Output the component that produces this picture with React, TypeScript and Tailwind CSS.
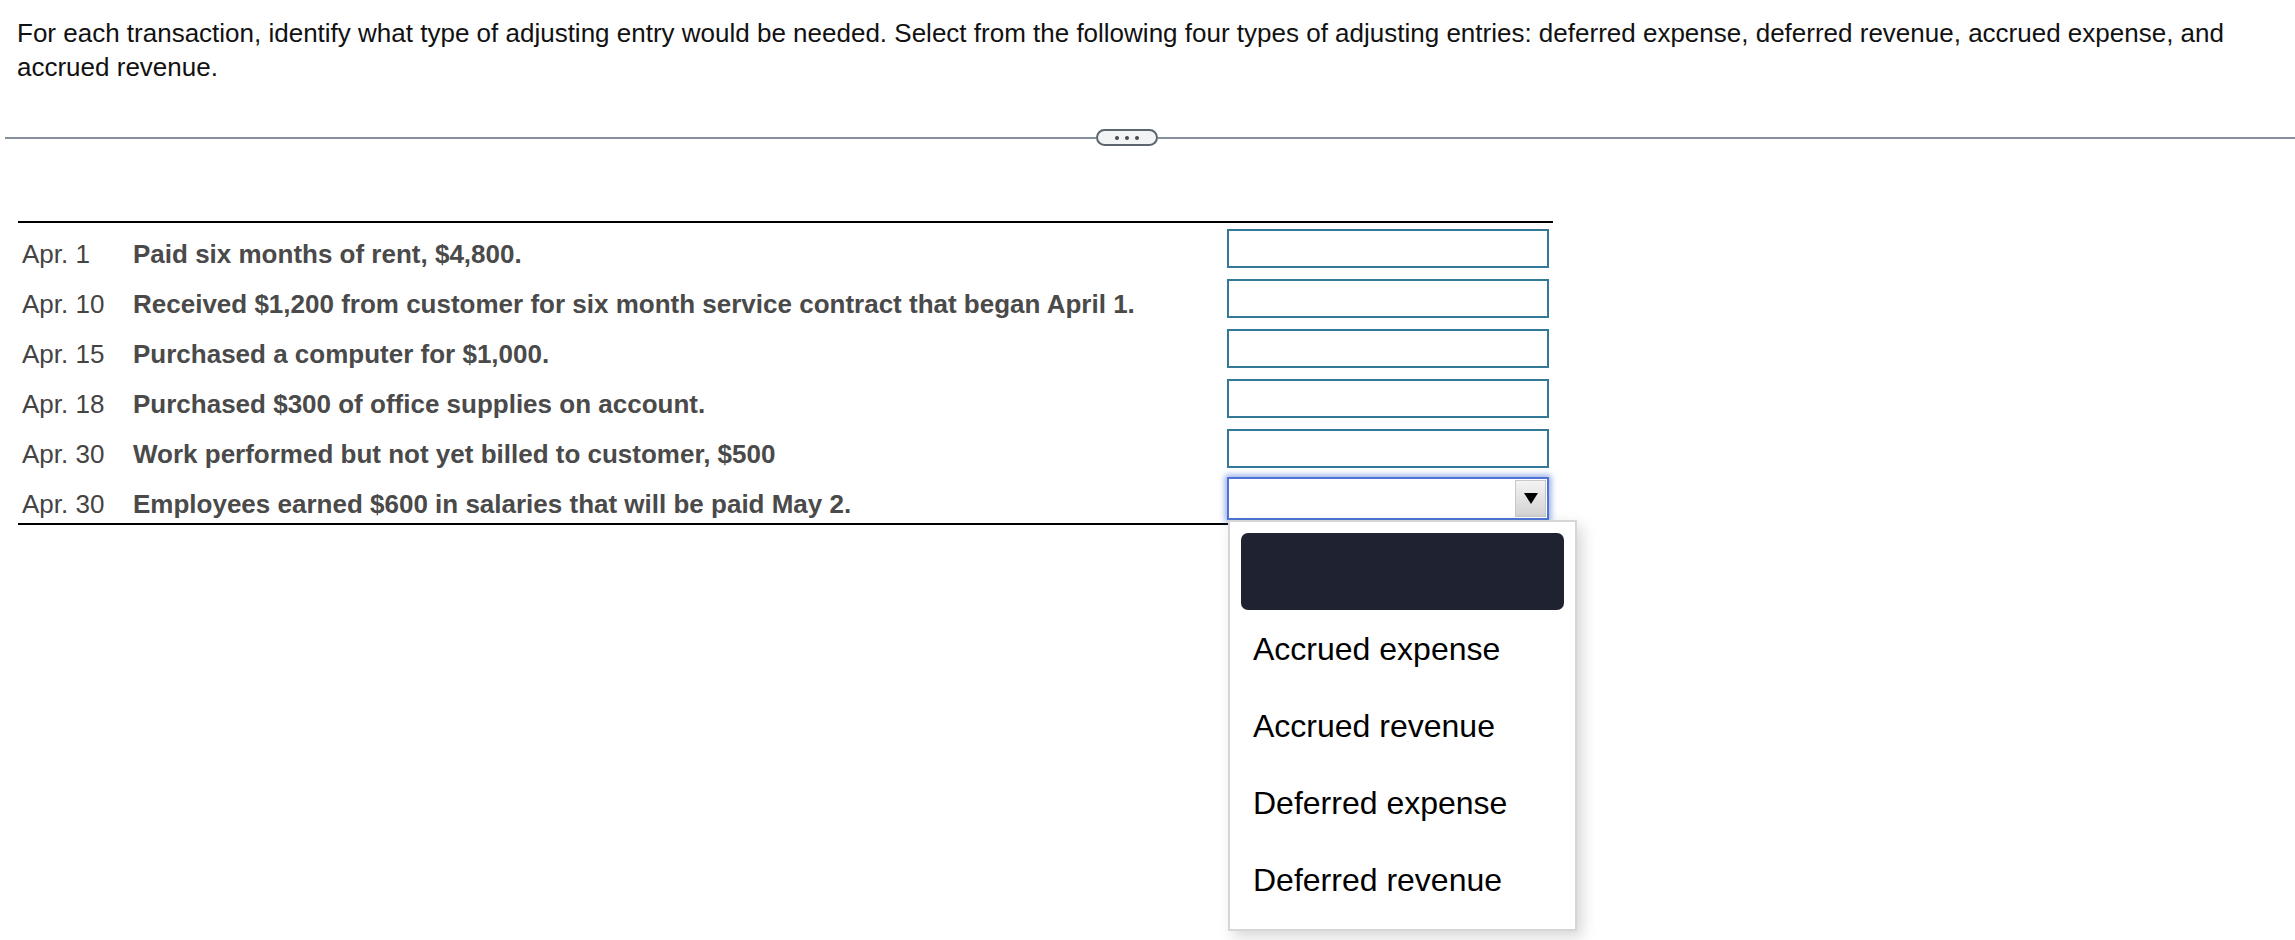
import React from 'react';

type Row = { date: string; text: string };

const rows: Row[] = [
  { date: 'Apr. 1', text: 'Paid six months of rent, $4,800.' },
  { date: 'Apr. 10', text: 'Received $1,200 from customer for six month service contract that began April 1.' },
  { date: 'Apr. 15', text: 'Purchased a computer for $1,000.' },
  { date: 'Apr. 18', text: 'Purchased $300 of office supplies on account.' },
  { date: 'Apr. 30', text: 'Work performed but not yet billed to customer, $500' },
  { date: 'Apr. 30', text: 'Employees earned $600 in salaries that will be paid May 2.' },
];

const options = ['Accrued expense', 'Accrued revenue', 'Deferred expense', 'Deferred revenue'];

// open select in the last row, list shown under it
function OpenSelect() {
  return (
    <div className="relative mt-[4px] w-[322px] h-[43px]">
      <div className="flex h-full w-full border-2 border-[#4d74d6] bg-white p-[1px] shadow-[0_0_6px_2px_rgba(77,116,214,0.6)]">
        <div className="flex-1" />
        <div className="flex w-[31px] items-center justify-center border border-[#c8c8c8] bg-gradient-to-b from-[#f4f4f4] to-[#d2d2d2]">
          <svg width="14" height="11" viewBox="0 0 14 11">
            <polygon points="0,0 14,0 7,11" fill="#000" />
          </svg>
        </div>
      </div>
      <div className="absolute left-[1px] top-[43px] z-10 w-[349px] border-2 border-[#d6d6d6] bg-white py-[11px] shadow-[5px_6px_14px_rgba(0,0,0,0.16)]">
        <div className="mx-[11px] h-[77px] rounded-[7px] bg-[#1f2230]" />
        {options.map((o) => (
          <div key={o} className="flex h-[77px] items-center px-[23px] text-[32px] text-black">
            {o}
          </div>
        ))}
      </div>
    </div>
  );
}

export default function App() {
  return (
    <div className="min-h-[940px] bg-white font-['Liberation_Sans',Arial,sans-serif]">
      <div className="pl-[17px] pr-[40px] pt-[16px] text-[26px] leading-[34px] text-[#111]">
        For each transaction, identify what type of adjusting entry would be needed. Select from the following four types of adjusting entries: deferred expense, deferred revenue, accrued expense, and accrued revenue.
      </div>

      <div className="mt-[45px] ml-[5px] flex h-[17px] items-center">
        <div className="h-[2px] w-[1091px] bg-[#868f9c]" />
        <div className="flex h-[17px] w-[62px] items-center justify-center gap-[6px] rounded-full border-2 border-[#5c6470] bg-[#f2f3f5]">
          <span className="h-[4px] w-[4px] rounded-full bg-[#444b55]" />
          <span className="h-[4px] w-[4px] rounded-full bg-[#444b55]" />
          <span className="h-[4px] w-[4px] rounded-full bg-[#444b55]" />
        </div>
        <div className="h-[2px] flex-1 bg-[#868f9c]" />
      </div>

      <div className="mt-[75px] ml-[18px] w-[1535px] border-t-2 border-b-2 border-black">
        {rows.map((r, i) => (
          <div key={i} className="flex h-[50px]">
            <div className="w-[115px] pl-[4px] pt-[16px] text-[26px] leading-[30px] text-[#444]">{r.date}</div>
            <div className="flex-1 pt-[16px] text-[26px] font-bold leading-[30px] text-[#4a4a4a]">{r.text}</div>
            <div className="mr-[4px]">
              {i === rows.length - 1 ? (
                <OpenSelect />
              ) : (
                <div className="mt-[6px] h-[39px] w-[322px] border-2 border-[#337a98] bg-white" />
              )}
            </div>
          </div>
        ))}
      </div>
    </div>
  );
}
